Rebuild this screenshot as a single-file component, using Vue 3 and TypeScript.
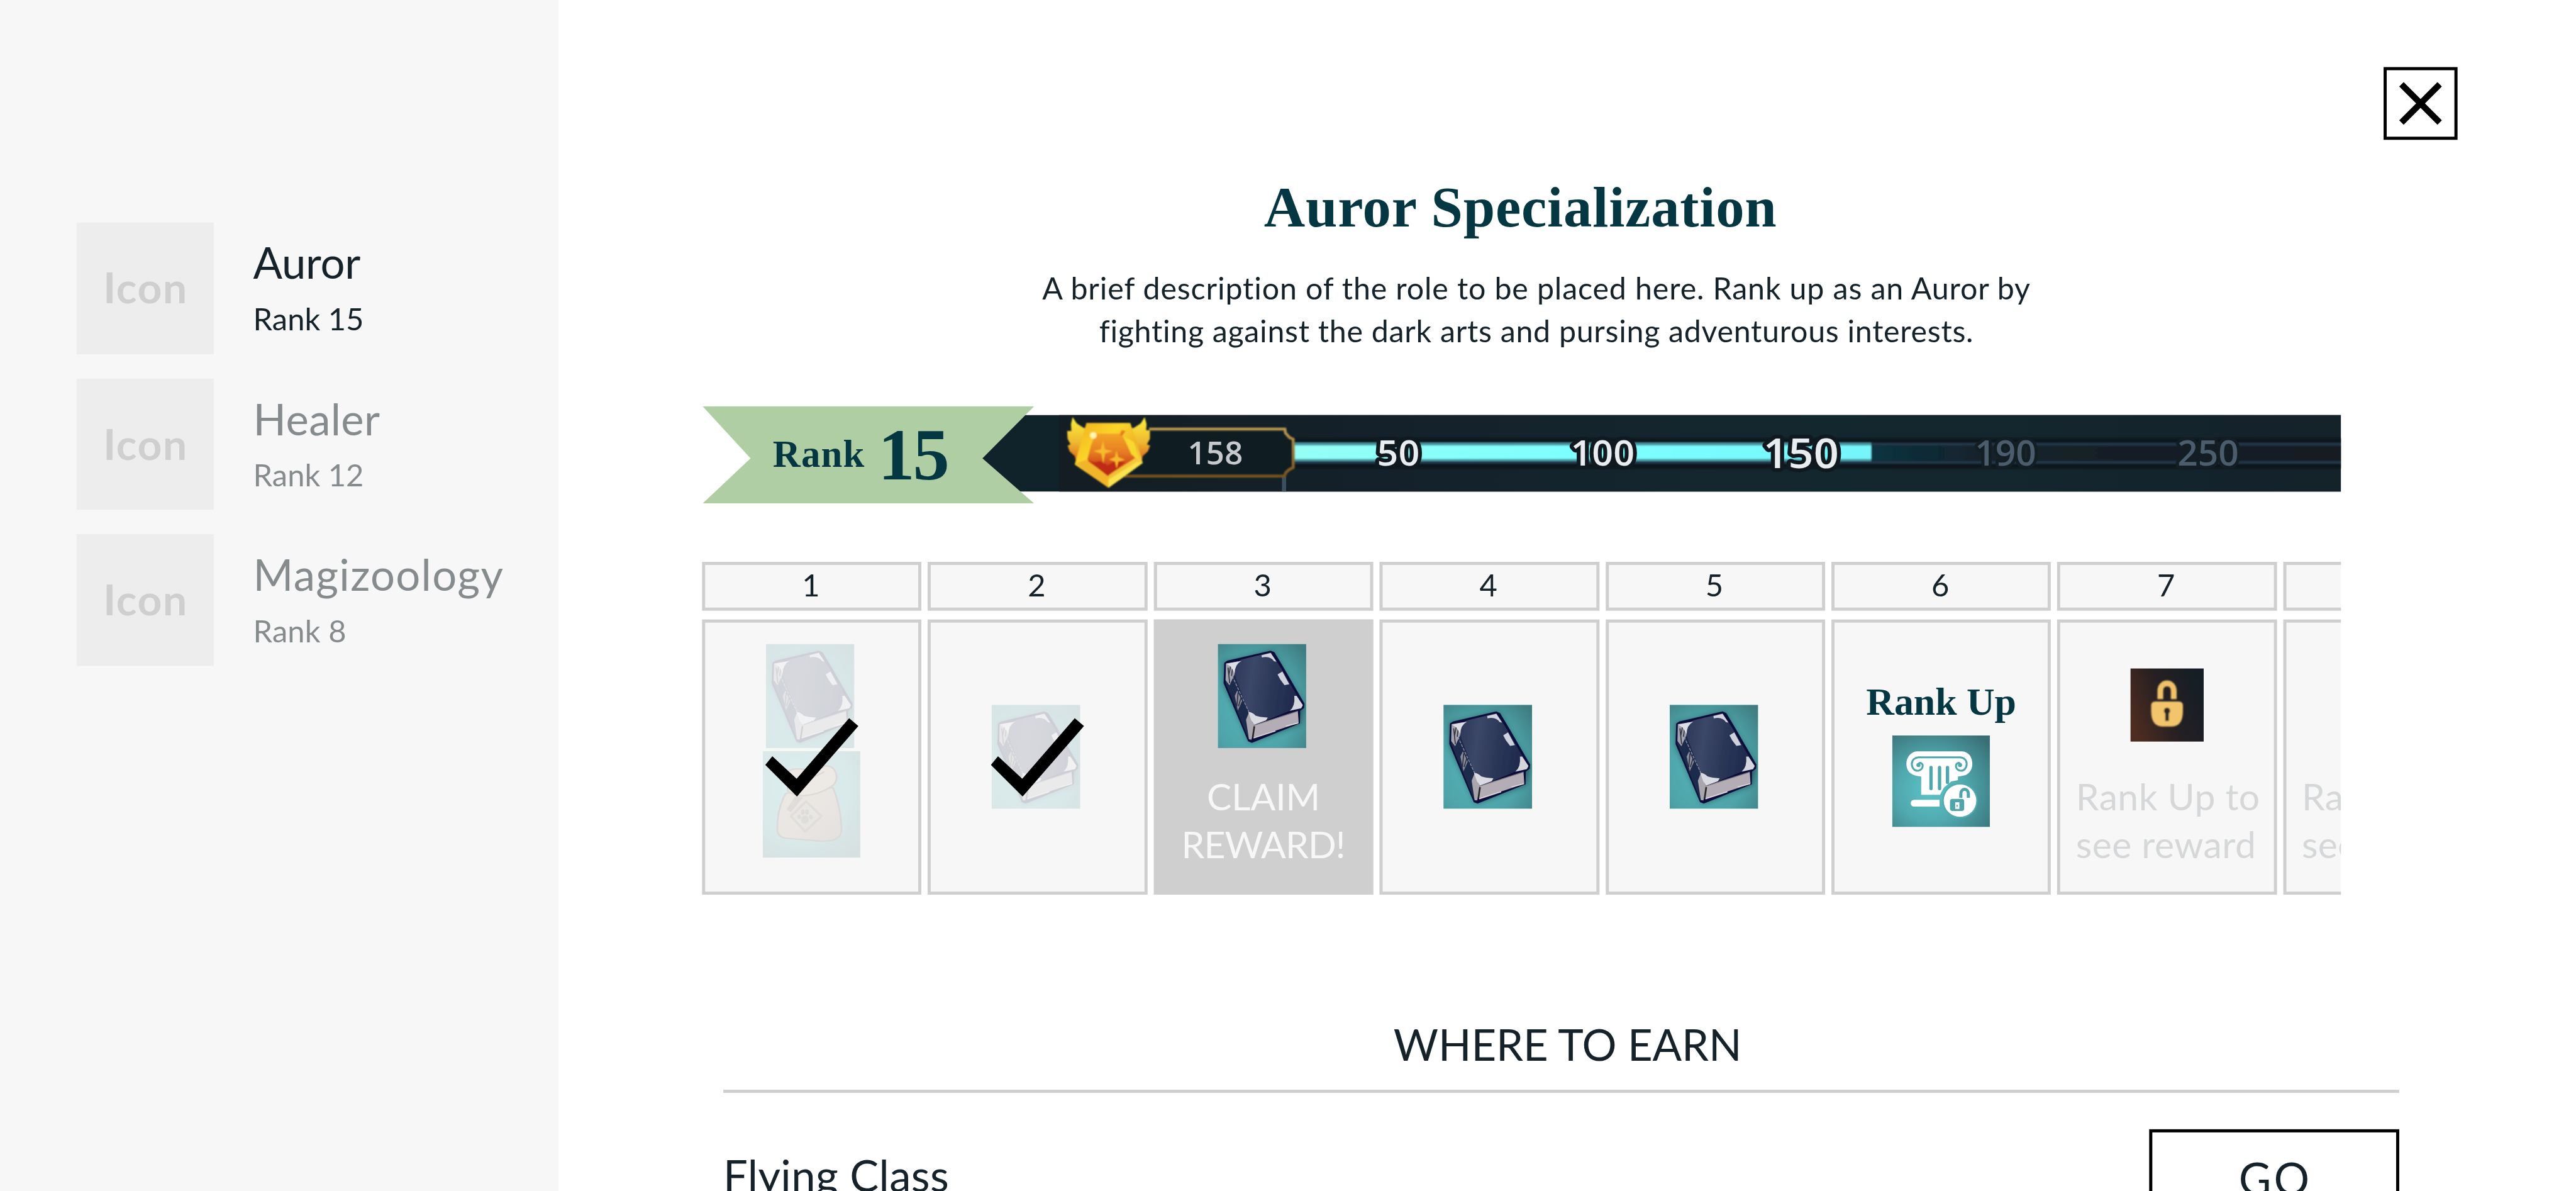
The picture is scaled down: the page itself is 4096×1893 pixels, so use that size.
<script setup lang="ts">
interface Role {
  name: string
  rank: string
  nameWidth: number
  rankWidth: number
  active: boolean
}

type LevelState = 'done' | 'claim' | 'open' | 'rankup' | 'locked'

interface Level {
  label: string
  state: LevelState
  bag?: boolean
}

const roles: Role[] = [
  { name: 'Auror', rank: 'Rank 15', nameWidth: 171, rankWidth: 170, active: true },
  { name: 'Healer', rank: 'Rank 12', nameWidth: 196, rankWidth: 170, active: false },
  { name: 'Magizoology', rank: 'Rank 8', nameWidth: 393, rankWidth: 143, active: false },
]

const levels: Level[] = [
  { label: '1', state: 'done', bag: true },
  { label: '2', state: 'done' },
  { label: '3', state: 'claim' },
  { label: '4', state: 'open' },
  { label: '5', state: 'open' },
  { label: '6', state: 'rankup' },
  { label: '7', state: 'locked' },
  { label: '', state: 'locked' },
]

// Tracks a single line of text out (or in) so that its ink spans the given width.
const vFit = {
  mounted(el: HTMLElement, binding: { value: number }) {
    const text = (el.textContent ?? '').trim()
    const style = getComputedStyle(el)
    const ctx = document.createElement('canvas').getContext('2d')
    if (!ctx || text.length < 2) return
    ctx.font = `${style.fontWeight} ${style.fontSize} ${style.fontFamily}`
    const m = ctx.measureText(text)
    const ink = m.actualBoundingBoxLeft + m.actualBoundingBoxRight
    const spacing = (binding.value - ink) / (text.length - 1)
    el.style.letterSpacing = `${spacing}px`
    el.style.marginRight = `${-spacing}px`
  },
}
</script>

<template>
  <div class="viewport">
    <div class="page">
      <aside class="sidebar">
        <div v-for="role in roles" :key="role.name" class="role" :class="{ active: role.active }">
          <div class="role-icon"><span v-fit="125">Icon</span></div>
          <div class="role-text">
            <div class="role-name"><span v-fit="role.nameWidth">{{ role.name }}</span></div>
            <div class="role-rank"><span v-fit="role.rankWidth">{{ role.rank }}</span></div>
          </div>
        </div>
      </aside>

      <main class="main">
        <button class="close" aria-label="Close">
          <svg viewBox="0 0 68 68"><path d="M3.5 3.5 64.500 64.500M64.500 3.500 3.500 64.500" stroke="#000" stroke-width="10" /></svg>
        </button>

        <div class="content">
          <h1 class="title"><span v-fit="819">Auror Specialization</span></h1>
          <p class="desc">
            <span v-fit="1583">A brief description of the role to be placed here. Rank up as an Auror by</span>
            <span v-fit="1391">fighting against the dark arts and pursing adventurous interests.</span>
          </p>

          <svg class="rank-bar" viewBox="1120 648 2615 155">
            <defs>
              <linearGradient id="barBg" x1="0" x2="1" y1="0" y2="0">
                <stop offset="0" stop-color="#141d23" /><stop offset=".25" stop-color="#14212a" />
                <stop offset=".6" stop-color="#13272f" /><stop offset="1" stop-color="#14222a" />
              </linearGradient>
              <linearGradient id="cyan" x1="0" x2="1" y1="0" y2="0">
                <stop offset="0" stop-color="#96fff6" /><stop offset=".5" stop-color="#7dffff" /><stop offset="1" stop-color="#76f6fb" />
              </linearGradient>
              <linearGradient id="empty" x1="0" x2="1" y1="0" y2="0">
                <stop offset="0" stop-color="#0e3341" /><stop offset=".25" stop-color="#14212a" /><stop offset="1" stop-color="#131d24" />
              </linearGradient>
              <linearGradient id="gold" x1="0" x2="0" y1="0" y2="1">
                <stop offset="0" stop-color="#b8974f" /><stop offset="1" stop-color="#79531f" />
              </linearGradient>
              <linearGradient id="shield" x1="0" x2="1" y1="0" y2="1">
                <stop offset="0" stop-color="#f3ad1c" /><stop offset=".35" stop-color="#fbd52a" /><stop offset=".6" stop-color="#f0b328" /><stop offset="1" stop-color="#fff060" />
              </linearGradient>
              <linearGradient id="gem" x1="0" x2="0" y1="0" y2="1">
                <stop offset="0" stop-color="#f3a428" /><stop offset=".45" stop-color="#e67c22" /><stop offset=".7" stop-color="#d2501a" /><stop offset="1" stop-color="#bd2c16" />
              </linearGradient>
              <linearGradient id="wing" x1="0" x2="0" y1="0" y2="1">
                <stop offset="0" stop-color="#fbf03c" /><stop offset=".55" stop-color="#f0b930" /><stop offset="1" stop-color="#d8601c" />
              </linearGradient>
              <filter id="soft" x="-10%" y="-10%" width="120%" height="120%"><feGaussianBlur stdDeviation="3" /></filter>
              <filter id="glow" x="-10%" y="-30%" width="120%" height="160%"><feGaussianBlur stdDeviation="1" /></filter>
            </defs>

            <path d="M1630 662H3735V784H1622L1560 731Z" fill="#11232a" />
            <rect x="1690" y="662" width="2045" height="122" fill="url(#barBg)" />

            <g filter="url(#glow)">
              <rect x="2060" y="699" width="1680" height="48" fill="#0d141a" />
              <rect x="2060" y="706" width="1680" height="5" fill="#22384a" />
              <rect x="2060" y="735" width="1680" height="4.500" fill="#22384a" />
              <rect x="2985" y="711" width="750" height="24" fill="url(#empty)" />
              <rect x="2060" y="706" width="925.500" height="29.500" fill="#4a9aa4" />
              <rect x="2060" y="710.500" width="925.500" height="21.500" fill="url(#cyan)" />
            </g>

            <g transform="translate(1680 650) scale(.33333)">
              <path d="M430 103H1108Q1112 138 1150 150V285Q1112 298 1106 326H350Z" fill="#0f1d23" />
              <path d="M1106 330V402" stroke="#3b4f5e" stroke-width="20" />
              <path d="M460 103H1110L1113 122 1132 143 1150 152V287L1130 297 1114 312 1108 328H340" fill="none" stroke="url(#gold)" stroke-width="14" filter="url(#soft)" />
              <g filter="url(#soft)">
                <path d="M94 46 114 76 148 98 165 100 150 250 112 262 104 232 80 210 70 182 84 176 70 150 68 112 88 112 86 80Z" fill="url(#wing)" />
                <path d="M439 46 420 76 386 98 370 100 384 250 424 262 430 232 454 210 465 182 450 176 464 150 464 108 446 108 448 80Z" fill="url(#wing)" />
                <path d="M160 74H370L396 150 430 265 266 384 104 272 138 150Z" fill="url(#shield)" />
                <path d="M205 125H325L370 195 392 243 262 325 168 258 165 245 182 180Z" fill="url(#gem)" />
                <path d="M172 252 200 262 225 256 262 276 295 258 345 262 262 328Z" fill="#be2c16" />
                <path d="M322 132 330 108 348 112 336 138 376 225 412 250 388 165Z" fill="#f8d82e" />
                <path d="M328 108 348 112 330 138 320 130Z" fill="#e8791f" />
                <path d="M108 268 158 250 172 262 266 335 266 384Z" fill="#f2b52a" />
                <path d="M266 384 266 345 400 262 430 265Z" fill="#fbe34e" />
                <path d="M239 158 249 200 285 208 249 220 241 268 231 220 193 208 229 200ZM304 205 313 238 345 250 313 258 305 292 297 258 268 248 296 238Z" fill="#f8b92e" />
                <circle cx="193" cy="133" r="16" fill="#fff6b0" />
              </g>
            </g>

            <g font-family="Open Sans, Noto Sans, sans-serif" font-weight="600" stroke-linejoin="round">
              <text x="1895" y="740.500" font-size="51" textLength="88" lengthAdjust="spacing" fill="#c6c9cc">158</text>
              <g fill="#e9edef" stroke="#10191f" stroke-width="12" paint-order="stroke">
                <text x="2197" y="743" font-size="57" textLength="68" lengthAdjust="spacingAndGlyphs">50</text>
                <text x="2506" y="743" font-size="57" textLength="102" lengthAdjust="spacingAndGlyphs">100</text>
                <text x="2813" y="746.500" font-size="65" textLength="121" lengthAdjust="spacingAndGlyphs">150</text>
              </g>
              <g fill="#4b5d6c" stroke="#131d24" stroke-width="10" paint-order="stroke">
                <text x="3151" y="743" font-size="57" textLength="98" lengthAdjust="spacingAndGlyphs">190</text>
                <text x="3474" y="743" font-size="57" textLength="98" lengthAdjust="spacingAndGlyphs">250</text>
              </g>
            </g>

            <path d="M1121 648H1650L1567.500 731 1650 803H1121L1197.500 731Z" fill="#afcea4" />
            <g font-family="Liberation Serif, serif" font-weight="700" fill="#053742">
              <text x="1233" y="745" font-size="61" textLength="146" lengthAdjust="spacing">Rank</text>
              <text x="1401" y="764.500" font-size="117" textLength="114" lengthAdjust="spacing">15</text>
            </g>
          </svg>

          <div class="levels">
            <div v-for="(level, i) in levels" :key="i" class="level">
              <div class="level-no">{{ level.label }}</div>
              <div class="level-body" :class="level.state">
                <div v-if="level.state === 'done' || level.state === 'claim' || level.state === 'open'" class="rewards">
                  <svg class="book" viewBox="69 52 424 498" preserveAspectRatio="none">
                    <defs>
                      <radialGradient :id="'teal' + i" cx=".4" cy=".6" r=".8">
                        <stop offset="0" stop-color="#56b5b9" /><stop offset=".6" stop-color="#4ea3a8" /><stop offset="1" stop-color="#3e7c80" />
                      </radialGradient>
                      <linearGradient :id="'navy' + i" x1="0" x2="1" y1="0" y2=".15">
                        <stop offset="0" stop-color="#2b365a" /><stop offset=".3" stop-color="#3c4768" /><stop offset=".6" stop-color="#2c3858" /><stop offset="1" stop-color="#1e284c" />
                      </linearGradient>
                      <filter :id="'shade' + i" x="-20%" y="-20%" width="140%" height="140%"><feGaussianBlur stdDeviation="13" /></filter>
                      <filter :id="'blur' + i" x="-5%" y="-5%" width="110%" height="110%"><feGaussianBlur stdDeviation="2" /></filter>
                    </defs>
                    <rect x="69" y="52" width="424" height="498" :fill="`url(#teal${i})`" />
                    <path d="M98 140 330 85 485 350 465 435 225 525 98 245Z" fill="#20484f" opacity=".75" :filter="`url(#shade${i})`" />
                    <g :filter="`url(#blur${i})`">
                      <path d="M100 142 115 132 322 84 340 92 378 155 484 338 482 358 463 372 462 432 232 525 214 518 97 240Z" fill="#0c0e3c" />
                      <path d="M108 148 140 145 245 435 215 505 106 240Z" fill="#1f2a4b" />
                      <path d="M108 145 180 133 148 160 150 195 125 250 106 225Z" fill="#a4a3b0" />
                      <path d="M118 165 126 240M132 150 122 200M140 165 135 205" stroke="#343440" stroke-width="5" fill="none" />
                      <path d="M150 300 162 275 185 325 165 370Z" fill="#8c8d9c" />
                      <path d="M166 285 160 350M180 310 168 350" stroke="#2c2e40" stroke-width="5" />
                      <path d="M204 415 220 375 250 435 230 510 218 508Z" fill="#a9a6b0" />
                      <path d="M148 165Q152 138 185 126L322 93 368 162 475 345 413 372 310 414 235 428 150 200Z" :fill="`url(#navy${i})`" />
                      <path d="M138 205 228 400" stroke="#8c91a8" stroke-width="4" stroke-dasharray="14 6" />
                      <path d="M110 147 182 133Q150 150 150 192L132 162Z" fill="#dcdde5" />
                      <path d="M278 106 322 95 350 137 338 135Q320 108 280 117Z" fill="#d3d4de" />
                      <path d="M355 198 378 184 411 245 388 249 368 222Z" fill="#cfd1dc" />
                      <path d="M435 300 446 300 476 345 468 360 413 372Q440 350 435 300Z" fill="#d5d5de" />
                      <path d="M215 378Q235 378 250 395 270 402 308 404L300 418 245 438 230 420Z" fill="#d9dae2" />
                      <path d="M240 442 452 374 456 430 240 502Z" fill="#b4adb5" />
                      <path d="M244 446 236 500" stroke="#282826" stroke-width="8" />
                      <path d="M240 502 345 468M395 445 454 430" stroke="#ded8dc" stroke-width="5" />
                      <path d="M240 442 452 374" stroke="#7c767e" stroke-width="4" />
                    </g>
                  </svg>
                  <svg v-if="level.bag" class="bag" viewBox="242 875 322 467" preserveAspectRatio="none">
                    <defs>
                      <radialGradient id="bagBg" cx=".4" cy=".35" r=".8">
                        <stop offset="0" stop-color="#5fc9c9" /><stop offset=".6" stop-color="#50a8a8" /><stop offset="1" stop-color="#3c7478" />
                      </radialGradient>
                      <linearGradient id="bagFill" x1="0" x2="1" y1="0" y2="1">
                        <stop offset="0" stop-color="#b9a68e" /><stop offset=".5" stop-color="#aa9a86" /><stop offset="1" stop-color="#85786a" />
                      </linearGradient>
                    </defs>
                    <rect x="242" y="875" width="322" height="467" fill="url(#bagBg)" />
                    <g stroke="#5f5048" stroke-width="6" stroke-linejoin="round">
                      <path d="M318 1060Q288 1130 290 1225 295 1255 325 1257L400 1265Q450 1275 480 1262 502 1250 502 1220 500 1120 474 1035Z" fill="url(#bagFill)" />
                      <path d="M322 965Q345 945 390 958 430 960 445 940 480 935 486 985 487 1015 468 1030 430 1065 380 1070 345 1070 325 1050Z" fill="#bdab94" />
                      <path d="M385 1000Q420 985 445 965" fill="none" />
                      <path d="M350 1070 320 1130 335 1142 375 1078Z" fill="#6f5f50" stroke="none" />
                      <path d="M385 1095 436 1160 382 1227 335 1160Z" fill="none" stroke="#6c6a62" stroke-width="9" />
                    </g>
                    <g fill="#68645a"><ellipse cx="381" cy="1175" rx="13" ry="18" /><ellipse cx="362" cy="1163" rx="6" ry="10" /><ellipse cx="374" cy="1142" rx="6" ry="12" /><ellipse cx="388" cy="1142" rx="6" ry="12" /><ellipse cx="401" cy="1163" rx="6" ry="10" /></g>
                  </svg>
                </div>
                <svg v-if="level.state === 'done'" class="check" viewBox="1221 1145 149 126">
                  <path d="M1232.300 1206 1271 1242 1354.800 1145.500 1369.500 1158 1271.600 1270.300 1221 1220Z" fill="#000" />
                </svg>
                <div v-if="level.state === 'claim'" class="note">
                  <span v-fit="174">CLAIM</span><span v-fit="253">REWARD!</span>
                </div>
                <template v-if="level.state === 'rankup'">
                  <div class="rankup-label"><span v-fit="236">Rank Up</span></div>
                  <svg class="column" viewBox="27 25 468 440" preserveAspectRatio="none">
                    <defs>
                      <radialGradient id="colBg" cx=".4" cy=".6" r=".78">
                        <stop offset="0" stop-color="#5cc3c8" /><stop offset=".45" stop-color="#50a9ae" /><stop offset="1" stop-color="#386f75" />
                      </radialGradient>
                      <filter id="colSoft"><feGaussianBlur stdDeviation="1.500" /></filter>
                    </defs>
                    <rect x="27" y="25" width="468" height="440" fill="url(#colBg)" />
                    <g filter="url(#colSoft)">
                      <path d="M145 101H362C395 103 411 130 411 162 411 195 390 217 362 219L342 222V240L310 246 275 275 256 310H166V222L145 219C115 214 95 195 95 162 95 128 118 103 145 101Z" fill="#fff" />
                      <path d="M153 169C150 161 157 154 166 158 178 165 175 188 153 194 133 197 121 180 121 161 121 143 135 131 153 130H352C371 131 384 143 384 161 384 180 372 197 352 194 330 188 328 165 340 158 349 154 356 161 353 169" fill="none" stroke="#4fa8ad" stroke-width="9" />
                      <circle cx="153" cy="167" r="10" fill="#4fa8ad" /><circle cx="352" cy="167" r="10" fill="#4fa8ad" />
                      <path d="M213 179V280M254 179V280M292 179V250" stroke="#4fa8ad" stroke-width="16" stroke-linecap="round" />
                      <path d="M133 334H254V367H133Q116 366 116 350 116 335 133 334Z" fill="#fff" />
                      <circle cx="352" cy="338" r="80" fill="none" stroke="#4fabb0" stroke-width="10" />
                      <circle cx="352" cy="338" r="78" fill="#fff" />
                      <path d="M356 324V306C356 276 392 276 392 306V324" fill="none" stroke="#4fa5aa" stroke-width="15" />
                      <rect x="304" y="330" width="68" height="58" rx="12" fill="#4fa5aa" />
                      <path d="M329 346H349V378H329Z" fill="#fff" /><path d="M338 358V368" stroke="#4fa5aa" stroke-width="5" />
                    </g>
                  </svg>
                </template>
                <template v-if="level.state === 'locked'">
                  <svg class="lock" viewBox="389 513 328 321" preserveAspectRatio="none">
                    <defs>
                      <linearGradient :id="'lockBg' + i" x1="0" x2="1" y1=".7" y2=".3">
                        <stop offset="0" stop-color="#4e2c20" /><stop offset=".5" stop-color="#251f22" /><stop offset="1" stop-color="#151e26" />
                      </linearGradient>
                      <filter :id="'lockSoft' + i"><feGaussianBlur stdDeviation="2.500" /></filter>
                    </defs>
                    <rect x="389" y="513" width="328" height="321" :fill="`url(#lockBg${i})`" />
                    <g :filter="`url(#lockSoft${i})`">
                      <path d="M523 648V612C523 568 583 568 583 612V648" fill="none" stroke="#f0c168" stroke-width="26" />
                      <path d="M500 658H606Q624 658 624 676V700Q624 768 575 768H532Q482 768 482 700V676Q482 658 500 658Z" fill="#f2c56c" />
                      <circle cx="553" cy="699" r="14" fill="#2c2420" /><path d="M545 700H561V744H545Z" fill="#2c2420" />
                    </g>
                  </svg>
                  <div class="note muted">
                    <span v-fit="286">Rank Up to</span><span v-fit="282">see reward</span>
                  </div>
                </template>
              </div>
            </div>
          </div>
        </div>

        <section class="earn">
          <h2 class="earn-title"><span v-fit="551">WHERE TO EARN</span></h2>
          <div class="earn-row">
            <div class="earn-name"><span v-fit="352">Flying Class</span></div>
            <button class="go"><span v-fit="107">GO</span></button>
          </div>
        </section>
      </main>
    </div>
  </div>
</template>

<style>
body {
  margin: 0;
  background: #fff;
}
</style>

<style scoped>
.viewport {
  width: 4096px;
  height: 1893px;
  overflow: hidden;
}
.page {
  display: flex;
  width: 4110px;
  height: 1900px;
  overflow: hidden;
  transform: scale(0.996594);
  transform-origin: 0 0;
  background: #fff;
  color: #16222a;
  font-family: Lato, "Open Sans", sans-serif;
}
span {
  display: inline-block;
  white-space: nowrap;
}
svg {
  display: block;
  flex: none;
}
button {
  padding: 0;
  background: #fff;
  border: 5px solid #000;
  border-radius: 0;
  box-sizing: border-box;
  font: inherit;
  color: inherit;
}
.sidebar {
  flex: none;
  box-sizing: border-box;
  width: 891px;
  padding: 355px 0 0 122px;
  background: #f7f7f7;
  display: flex;
  flex-direction: column;
  gap: 39px;
}
.role {
  display: flex;
  height: 209.500px;
  color: #868c8e;
}
.role.active {
  color: #16222a;
}
.role-icon {
  width: 219px;
  margin-right: 63px;
  background: #ededed;
  color: #cfcfcf;
  font-size: 68px;
  font-weight: 700;
  line-height: 206px;
  text-align: center;
}
.role-name {
  margin-top: 24px;
  font-size: 69px;
  line-height: 80px;
}
.role-rank {
  margin-top: 15px;
  font-size: 49px;
  line-height: 68px;
}
.main {
  flex: 1;
  min-width: 0;
  display: flex;
  flex-direction: column;
}
.close {
  flex: none;
  align-self: flex-end;
  width: 118px;
  height: 116.500px;
  margin: 106.700px 189.500px 0 0;
  display: flex;
  align-items: center;
  justify-content: center;
}
.close svg {
  width: 68px;
  height: 68px;
}
.content {
  width: 2615px;
  margin-left: 229px;
}
.title {
  margin: 57.500px 4px 0 0;
  font-family: "Liberation Serif", serif;
  font-size: 91px;
  font-weight: 700;
  line-height: 100px;
  color: #053742;
  text-align: center;
}
.desc {
  margin: 44.500px 0 0;
  padding-left: 47px;
  display: flex;
  flex-direction: column;
  align-items: center;
  font-size: 48.500px;
  line-height: 68px;
}
.rank-bar {
  width: 2615px;
  height: 155px;
  margin-top: 86.700px;
}
.levels {
  display: flex;
  gap: 10px;
  margin-top: 93px;
  overflow: hidden;
}
.level {
  flex: none;
  width: 350.400px;
}
.level-no {
  box-sizing: border-box;
  height: 78px;
  border: 5px solid #cfcfcf;
  background: #f7f7f7;
  padding-right: 3px;
  font-size: 49px;
  line-height: 63px;
  text-align: center;
}
.level-body {
  position: relative;
  box-sizing: border-box;
  height: 438.700px;
  margin-top: 14px;
  border: 5px solid #cfcfcf;
  background: #f7f7f7;
  display: flex;
  flex-direction: column;
  align-items: center;
}
.done,
.open {
  justify-content: center;
}
.claim {
  background: #cfcfcf;
  color: #f7f7f7;
}
.rewards {
  display: flex;
  flex-direction: column;
  align-items: center;
  gap: 5px;
  padding-right: 5px;
}
.done .rewards {
  opacity: 0.17;
}
.claim .rewards {
  margin-top: 34px;
}
.book {
  width: 141.400px;
  height: 166px;
}
.bag {
  width: 155.600px;
  height: 170px;
  margin-left: 5px;
}
.done:has(.bag) .rewards {
  padding-right: 5px;
}
.done:has(.bag) {
  padding-bottom: 20px;
}
.check {
  position: absolute;
  left: 96px;
  top: 152.500px;
  width: 149px;
  height: 126px;
}
.note {
  margin-top: 38px;
  display: flex;
  flex-direction: column;
  align-items: center;
  font-size: 59px;
  line-height: 77.400px;
}
.rankup-label {
  margin-top: 92px;
  font-family: "Liberation Serif", serif;
  font-size: 62px;
  font-weight: 700;
  line-height: 68px;
  color: #053742;
}
.column {
  width: 155.800px;
  height: 146px;
  margin-top: 20.500px;
}
.lock {
  width: 117px;
  height: 116.700px;
  margin-top: 73.500px;
}
.note.muted {
  align-items: flex-start;
  width: 291px;
  margin-top: 48px;
  color: #d5d7d8;
}
.earn {
  width: 2673.500px;
  margin: 199px 0 0 263px;
}
.earn-title {
  margin: 0;
  padding: 0 0 32.300px 21px;
  border-bottom: 5px solid #cfcfcf;
  font-size: 69px;
  font-weight: 400;
  line-height: 80px;
  text-align: center;
}
.earn-row {
  display: flex;
  justify-content: space-between;
  align-items: flex-start;
  margin-top: 58px;
}
.earn-name {
  margin-top: 33px;
  font-size: 69px;
  line-height: 80px;
}
.go {
  width: 398.500px;
  height: 155px;
  font-size: 71px;
}
</style>
